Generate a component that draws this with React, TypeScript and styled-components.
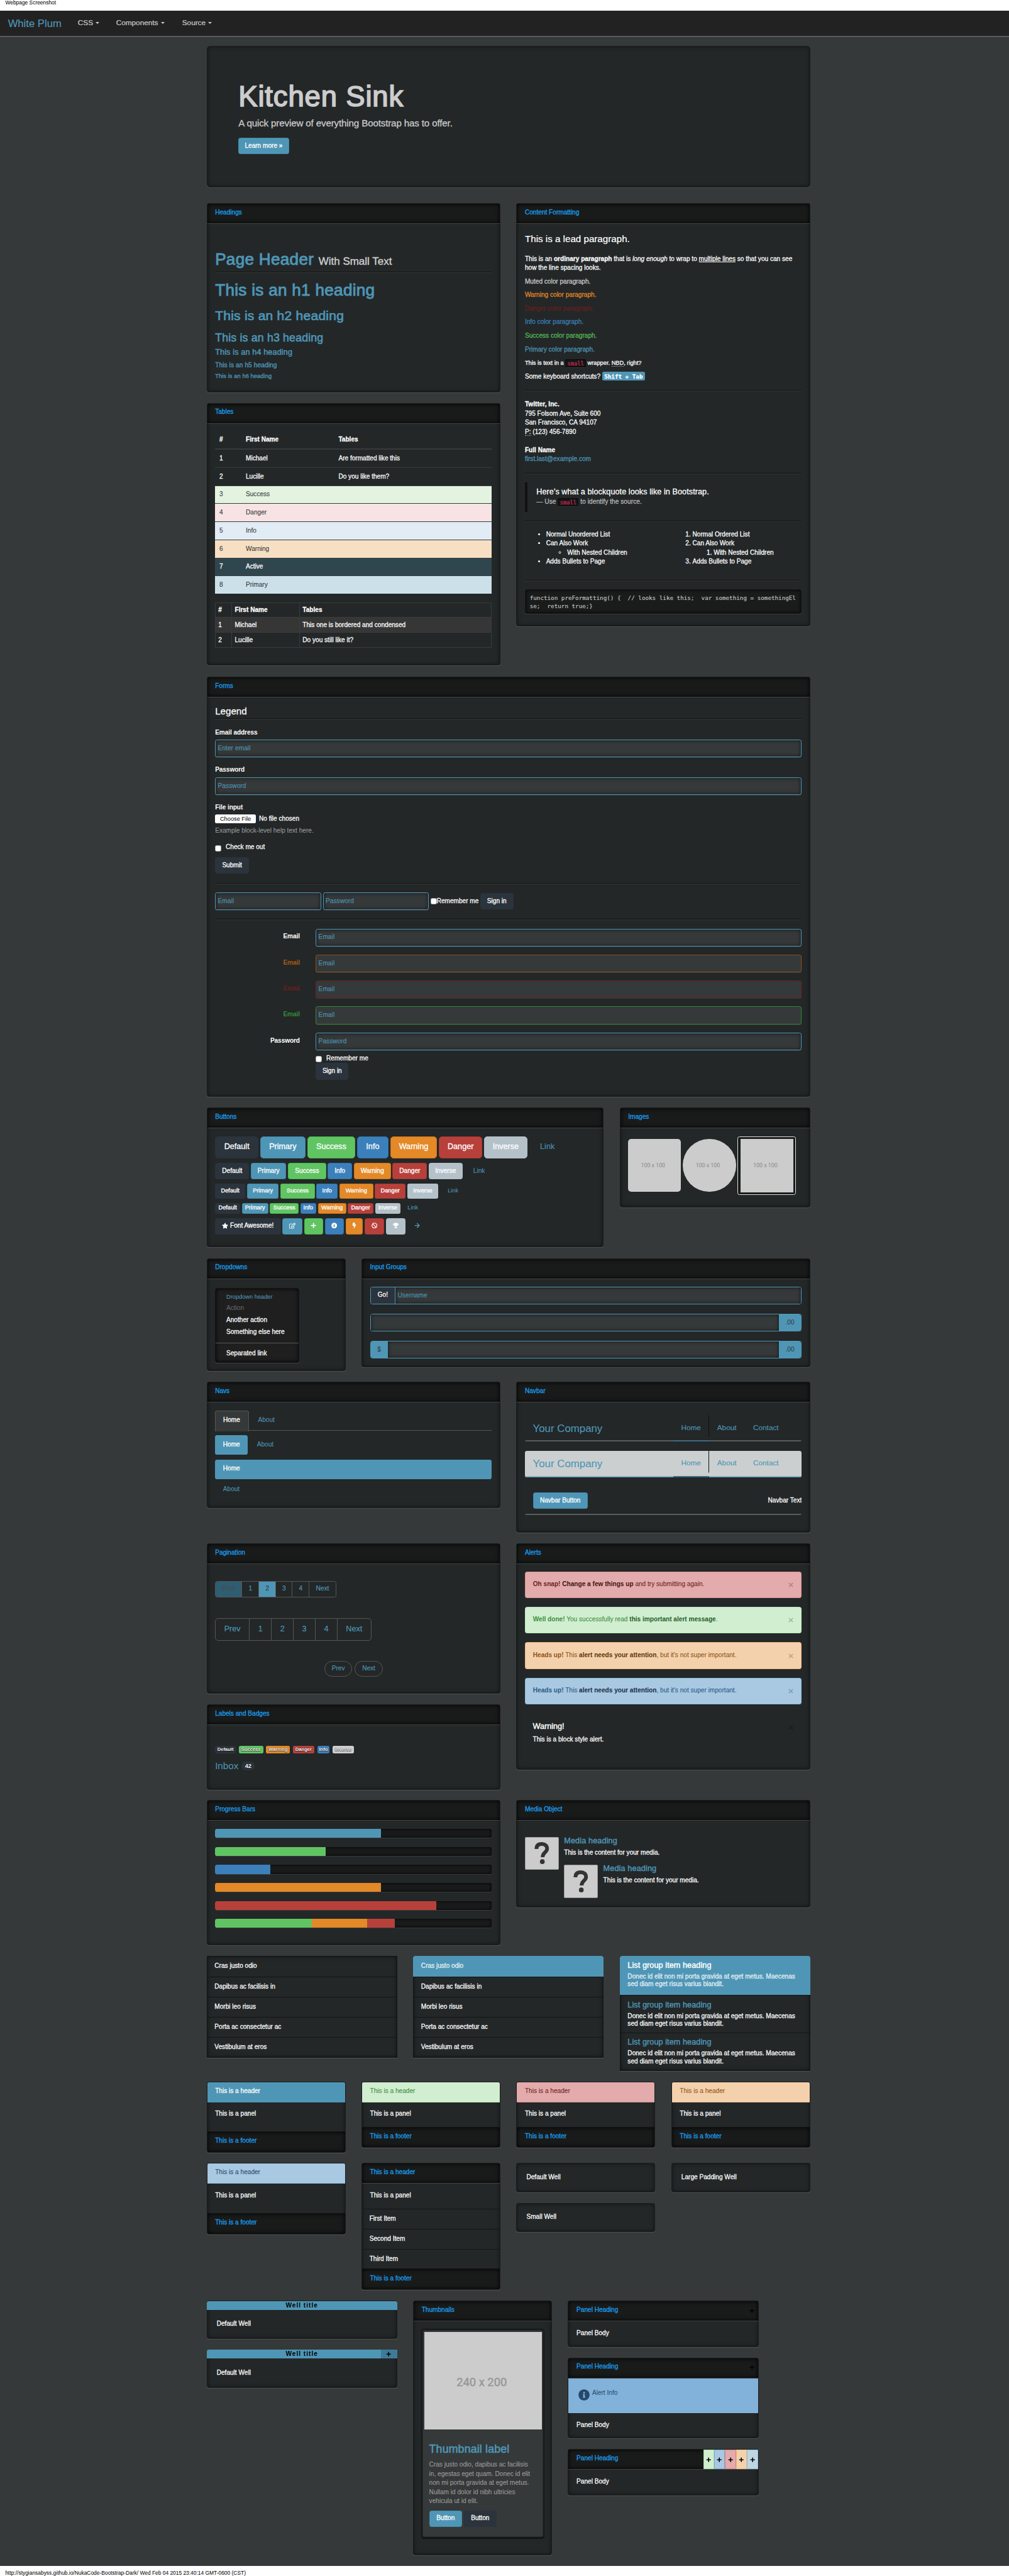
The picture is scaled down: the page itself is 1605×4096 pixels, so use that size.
import React from 'react';
import styled, { createGlobalStyle, css } from 'styled-components';
import { FaStar, FaRegEdit, FaPlus, FaInfoCircle, FaBolt, FaBan, FaTrophy, FaArrowRight } from 'react-icons/fa';

const c = {
  page: '#353939', panel: '#232728', head: '#191b1a', primary: '#4f96b6', link: '#4f96b6',
  success: '#61c463', info: '#3b80bb', warning: '#e38927', danger: '#b8403b', inverse: '#b4c1c9',
  dark: '#2b333c', title: '#18a2f8', muted: '#cccccc',
};

const Global = createGlobalStyle`
  html, body { margin: 0; padding: 0; background: #fff; }
  body { overflow-x: hidden; }
  *, *::before, *::after { box-sizing: border-box; }
`;

const Root = styled.div`
  zoom: 0.8424;
  font: 12px/17.14px "Liberation Sans", Arial, sans-serif;
  color: #fff;
  height: 4862px;
  overflow: hidden;
  display: flex;
  flex-direction: column;
`;
const Strip = styled.div<{ $h: number; $t?: number }>`
  height: ${p => p.$h}px;
  flex: none;
  padding: ${p => p.$t || 0}px 10px 0;
  background: #fff;
  color: #000;
  font-size: 10px;
  line-height: 10px;
  white-space: nowrap;
  overflow: hidden;
`;
const TopNav = styled.nav`
  height: 50px;
  flex: none;
  background: #222;
  border-bottom: 3px solid #575c5c;
  display: flex;
  padding-left: 15px;
`;
const Brand = styled.div`
  font-size: 19.8px;
  line-height: 20px;
  padding-top: 16px;
  color: ${c.primary};
  margin-right: 15px;
  width: 102px;
  white-space: nowrap;
  -webkit-text-stroke: 0.2px;
`;
const TopLink = styled.div<{ $w: number }>`
  font-size: 14px;
  line-height: 20px;
  padding: 13px 0 0 15px;
  width: ${p => p.$w}px;
  color: #ccc;
  -webkit-text-stroke: 0.25px #ccc;
  display: flex;
  &::after {
    content: '';
    margin: 9px 0 0 5px;
    width: 0; height: 0;
    border: 4px solid transparent;
    border-top-color: #ccc;
    border-bottom: 0;
  }
`;
const Page = styled.main`
  flex: 1;
  background: ${c.page};
  padding: 17px 0 0 390px;
`;
const Row = styled.div<{ $h: number }>`
  height: ${p => p.$h}px;
  width: 1140px;
  display: flex;
  align-items: flex-start;
  gap: 30px;
`;
const Col = styled.div<{ $w: number; $gap?: number }>`
  width: ${p => p.$w}px;
  flex: none;
  display: flex;
  flex-direction: column;
  gap: ${p => p.$gap ?? 20}px;
`;
const inset = css`box-shadow: inset 0 0 8px rgba(0,0,0,0.55), 0 1px 0 rgba(255,255,255,0.16);`;
const Frame = styled.section<{ $h: number }>`
  height: ${p => p.$h}px;
  flex: none;
  border: 1px solid #1b1d1d;
  border-radius: 4px;
  background: ${c.panel};
  ${inset}
  overflow: hidden;
  display: flex;
  flex-direction: column;
`;
const heads: Record<string, [string, string, string]> = {
  base: [c.head, c.title, '#414341'],
  primary: [c.primary, '#fff', c.primary],
  success: ['#d1eed0', '#3b8f3e', '#c3e9c0'],
  danger: ['#e3abab', '#6b2320', '#dc9297'],
  warning: ['#f4d1ad', '#8f5415', '#f0bd92'],
  info: ['#a9c8e2', '#24496b', '#98c3dd'],
};
const Head = styled.header<{ $k: string }>`
  height: 38px;
  flex: none;
  padding: 9.3px 15px 0;
  line-height: 14.5px;
  background: ${p => heads[p.$k][0]};
  color: ${p => heads[p.$k][1]};
  -webkit-text-stroke: ${p => (p.$k === 'base' || p.$k === 'primary' ? 0.3 : 0.1)}px;
  border-bottom: 1px solid ${p => heads[p.$k][2]};
  box-shadow: ${p => (p.$k === 'base' ? 'inset 0 0 9px #000' : 'none')};
  display: flex;
  justify-content: space-between;
  white-space: nowrap;
`;
const Foot = styled.footer`
  margin-top: auto;
  height: 39px;
  padding: 9px 15px 0;
  line-height: 17px;
  background: ${c.head};
  color: ${c.title};
  -webkit-text-stroke: 0.3px;
  border-top: 1px solid #101111;
  box-shadow: inset 0 0 9px #000;
`;
const Body = styled.div<{ $p?: number; $h?: number }>`
  padding: ${p => p.$p ?? 15}px 15px 0;
  height: ${p => (p.$h ? p.$h + 'px' : 'auto')};
  -webkit-text-stroke: 0.3px;
`;
const Panel = ({ h, title, kind = 'base', foot, extra, children }: any) => (
  <Frame $h={h}>
    <Head $k={kind}><span>{title}</span>{extra}</Head>
    {children}
    {foot && <Foot>{foot}</Foot>}
  </Frame>
);

const Jumbo = styled.section`
  width: 1140px;
  height: 267px;
  border-radius: 6px;
  background: ${c.panel};
  border: 1px solid #1b1d1d;
  ${inset}
  padding: 65px 59px 0;
  color: #ccc;
`;
const JumboTitle = styled.h1`
  margin: 0;
  font-weight: 400;
  font-size: 54px;
  line-height: 60px;
  letter-spacing: 1px;
  -webkit-text-stroke: 2px;
  height: 70px;
`;
const JumboText = styled.p`
  margin: 0 0 17px;
  font-size: 18px;
  line-height: 20px;
  letter-spacing: -0.18px;
  -webkit-text-stroke: 0.3px;
`;

const H = styled.div<{ $s: number; $t?: number; $b?: number }>`
  font-size: ${p => p.$s}px;
  line-height: ${p => p.$s * 1.1}px;
  margin: ${p => p.$t || 0}px 0 ${p => p.$b || 0}px;
  color: ${c.primary};
  -webkit-text-stroke: ${p => p.$s * 0.035}px;
  letter-spacing: ${p => p.$s * 0.011}px;
  white-space: nowrap;
`;
const Small = styled.small`font-size: 65%; color: #ccc; -webkit-text-stroke: 0.5px; letter-spacing: 0;`;
const PageHeader = styled.div`
  margin: 34px 0 0;
  height: 42px;
  border-bottom: 1px solid #111;
  box-shadow: 0 1px 0 #3b3e3e;
`;
const Rule = styled.hr<{ $t?: number; $b?: number }>`
  border: 0;
  height: 1px;
  background: #111;
  box-shadow: 0 1px 0 #393c3c;
  margin: ${p => p.$t ?? 17}px 0 ${p => p.$b ?? 17}px;
`;
const TRow = styled.div<{ $bg?: string; $fg?: string; $head?: boolean }>`
  display: grid;
  grid-template-columns: 50px 175px 1fr;
  height: ${p => (p.$head ? 34 : 34.13)}px;
  padding-top: 8px;
  border-${p => (p.$head ? 'bottom: 2px' : 'top: 1px')} solid #383b3b;
  background: ${p => p.$bg || 'transparent'};
  color: ${p => p.$fg || '#fff'};
  -webkit-text-stroke: ${p => (p.$fg ? 0.1 : 0.3)}px;
  font-weight: ${p => (p.$head ? 700 : 400)};
  & > span { padding-left: 8px; }
`;
const TRow2 = styled.div<{ $bg?: string; $head?: boolean }>`
  display: grid;
  grid-template-columns: 31px 128px 1fr;
  height: 28.4px;
  border-bottom: 1px solid #393b3b;
  background: ${p => p.$bg || 'transparent'};
  font-weight: ${p => (p.$head ? 700 : 400)};
  & > span { padding: 5px 5px 0; border-left: 1px solid #393b3b; }
`;
const Table2 = styled.div`
  margin-top: 16px;
  border-top: 1px solid #393b3b;
  border-right: 1px solid #393b3b;
`;

const Lead = styled.p`margin: 0 0 17px; font-size: 18px; line-height: 25.2px; -webkit-text-stroke: 0.25px;`;
const P = styled.p<{ $c?: string; $s?: number }>`
  margin: 0 0 8.5px;
  height: ${p => (p.$s ? '17.1px' : 'auto')};
  color: ${p => p.$c || 'inherit'};
  font-size: ${p => p.$s || 12}px;
`;
const Code = styled.code`
  font: 10.3px/13px "DejaVu Sans Mono", monospace;
  color: #c7254e;
  background: #161818;
  border-radius: 4px;
  padding: 2px 4px;
  box-shadow: inset 0 0 4px #000, 0 1px 0 #3b3e3e;
`;
const Kbd = styled.kbd`
  font: bold 11px/13px "DejaVu Sans Mono", monospace;
  color: #fff;
  background: ${c.primary};
  border-radius: 3px;
  padding: 2px 4px;
`;
const Abbr = styled.span`border-bottom: 1px dotted #aaa;`;
const A = styled.span`color: ${c.link};`;
const Address = styled.address<{ $t?: number }>`font-style: normal; margin-top: ${p => p.$t || 0}px;`;
const Quote = styled.div`
  height: 55px;
  border-left: 5px solid #111;
  padding: 8.5px 17px 0;
  font-size: 15px;
  line-height: 20px;
  letter-spacing: 0.08px;
  & > div { font-size: 12px; line-height: 17px; color: #bbb; }
`;
const Lists = styled.div`
  display: grid;
  grid-template-columns: 276.5px 1fr;
  height: 77px;
  ul, ol { margin: 0; padding-left: 40px; }
`;
const Pre = styled.pre`
  margin: 0;
  height: 46px;
  padding: 8px 0 0 8px;
  font: 11px/15px "DejaVu Sans Mono", monospace;
  color: #ccc;
  background: #1a1c1b;
  border-radius: 4px;
  border: 1px solid #151717;
  box-shadow: inset 0 0 6px #000, 0 1px 0 #3b3e3e;
  -webkit-text-stroke: 0.1px;
`;

const Legend = styled.div`
  font-size: 18px;
  line-height: 25px;
  height: 27px;
  border-bottom: 1px solid #111;
  box-shadow: 0 1px 0 #393c3c;
  margin-bottom: 17px;
  -webkit-text-stroke: 0.3px;
`;
const Label = styled.div<{ $c?: string }>`
  font-weight: 700;
  -webkit-text-stroke: 0;
  color: ${p => p.$c || '#fff'};
  margin-bottom: 5px;
  letter-spacing: -0.1px;
`;
const Field = styled.div<{ $c?: string; $w?: number; $mb?: number }>`
  height: 33.5px;
  width: ${p => (p.$w ? p.$w + 'px' : 'auto')};
  flex: ${p => (p.$w ? 'none' : '1')};
  margin-bottom: ${p => p.$mb || 0}px;
  padding: 7px 4px 0;
  background: ${c.page};
  border: 1px solid ${p => p.$c || c.primary};
  border-radius: 4px;
  color: ${c.primary};
  letter-spacing: 0.1px;
  -webkit-text-stroke: 0.15px;
  box-shadow: ${p => (p.$c ? 'inset 0 1px 1px rgba(0,0,0,.08)' : 'inset 0 0 7px rgba(0,0,0,.6)')}, 0 1px 0 rgba(255,255,255,.1);
`;
const HRow = styled.div<{ $h?: number }>`
  display: flex;
  height: ${p => p.$h || 49}px;
  & > ${Label} { width: 160px; text-align: right; padding-top: 7px; margin: 0 30px 0 0; }
  & > ${Field} { height: 33.5px; }
`;
const Check = styled.span`
  width: 12px; height: 12px;
  background: #fff;
  border: 1px solid #aaa;
  border-radius: 3px;
  flex: none;
`;
const CheckRow = styled.div<{ $h: number; $l?: number }>`
  display: flex;
  gap: 8px;
  height: ${p => p.$h}px;
  margin-left: ${p => p.$l || 0}px;
  ${Check} { margin-top: 4px; }
`;
const Indent = styled.div`padding-left: 190px;`;
const FileRow = styled.div`
  display: flex;
  gap: 6px;
  height: 17px;
  & > b {
    width: 77px; height: 16px;
    background: #fff; color: #000;
    font-size: 11px; line-height: 17px; font-weight: 400;
    border-radius: 3px;
    text-align: center;
    -webkit-text-stroke: 0;
  }
`;
const Help = styled.div`color: #9a9a9a; -webkit-text-stroke: 0.1px; margin-top: 5px; height: 31.5px;`;
const Inline = styled.div`
  display: flex;
  align-items: center;
  height: 33.5px;
  gap: 3.5px;
`;
const InlineText = styled.span`margin: 0 -1px 0 -4px; white-space: nowrap;`;

const kinds: Record<string, [string, string, string]> = {
  default: [c.dark, '#fff', c.dark],
  primary: [c.primary, '#fff', '#4087a6'],
  success: [c.success, '#fff', '#47b749'],
  info: [c.info, '#fff', '#3372a8'],
  warning: [c.warning, '#fff', '#cf771a'],
  danger: [c.danger, '#fff', '#a33733'],
  inverse: [c.inverse, '#fff', c.inverse],
  link: ['transparent', c.link, 'transparent'],
};
const sizes = { lg: [41, 15, 6], md: [31, 12, 4], sm: [28, 11, 3], xs: [20, 11, 3] } as const;
const Btn = styled.button<{ $k?: string; $s?: keyof typeof sizes; $w: number }>`
  font-family: inherit;
  height: ${p => sizes[p.$s || 'md'][0]}px;
  width: ${p => p.$w}px;
  flex: none;
  padding: 0 0 2px;
  font-size: ${p => sizes[p.$s || 'md'][1]}px;
  border-radius: ${p => sizes[p.$s || 'md'][2]}px;
  background: ${p => kinds[p.$k || 'default'][0]};
  color: ${p => kinds[p.$k || 'default'][1]};
  border: 1px solid ${p => kinds[p.$k || 'default'][2]};
  -webkit-text-stroke: ${p => (p.$k === 'link' ? 0.1 : 0.35)}px;
  display: flex;
  align-items: center;
  justify-content: center;
  gap: 3px;
  white-space: nowrap;
`;
const BtnRow = styled.div<{ $h: number }>`display: flex; gap: 3.4px; height: ${p => p.$h}px;`;
const names = ['Default', 'Primary', 'Success', 'Info', 'Warning', 'Danger', 'Inverse', 'Link'];

const Images = styled.div`display: flex; align-items: center; gap: 3.4px; height: 110px;`;
const Ph = styled.div<{ $r: string }>`
  width: 100px; height: 100px;
  border-radius: ${p => p.$r};
  background: #ccc;
  color: #969696;
  font: 10.5px/102px Roboto, sans-serif;
  text-align: center;
  padding-right: 6px;
  -webkit-text-stroke: 0.2px;
`;
const Thumb = styled.div`
  width: 110px; height: 110px;
  border: 1px solid #ddd;
  border-radius: 4px;
  padding: 4px;
  background: #1a1c1b;
`;
const Menu = styled.div`
  margin-top: 2px;
  width: 158.5px;
  height: 141px;
  background: #1f1f1f;
  border: 1px solid #151515;
  border-radius: 4px;
  box-shadow: inset 0 0 7px #000, 0 1px 0 #414444;
  padding: 7px 0 0;
`;
const MenuItem = styled.div<{ $c?: string; $s?: number; $h: number }>`
  padding-left: 20px;
  height: ${p => p.$h}px;
  color: ${p => p.$c || '#fff'};
  font-size: ${p => p.$s || 12}px;
  -webkit-text-stroke: ${p => (p.$c ? 0.1 : 0.3)}px;
`;
const Divider = styled.div`height: 1px; background: #565656; margin: 0 0 11px;`;
const Group = styled.div`
  height: 34px;
  margin-bottom: 17px;
  display: flex;
  border: 1px solid ${c.primary};
  border-radius: 4px;
  overflow: hidden;
`;
const Addon = styled.div<{ $w: number }>`
  width: ${p => p.$w}px;
  background: ${c.primary};
  color: #353939;
  line-height: 31px;
  text-align: center;
  -webkit-text-stroke: 0.1px;
`;
const Go = styled(Addon)`background: ${c.dark}; color: #fff; border-right: 1px solid ${c.primary}; -webkit-text-stroke: 0.3px; line-height: 29px;`;
const GInput = styled.div`
  flex: 1;
  background: ${c.page};
  box-shadow: inset 0 0 8px rgba(0,0,0,.6);
  color: ${c.primary};
  line-height: 30px;
  padding-left: 4px;
  letter-spacing: 0.1px;
  -webkit-text-stroke: 0.15px;
`;

const Tabs = styled.div`height: 39px; border-bottom: 1px solid #565656; display: flex; align-items: flex-start; gap: 2px; & > * { flex: none; }`;
const Pills = styled.div`height: 54px; padding-top: 8px; display: flex; gap: 2px;`;
const Stack = styled.div`display: flex; flex-direction: column; gap: 2px;`;
const Pill = styled.div<{ $on?: boolean; $tab?: boolean }>`
  height: ${p => (p.$tab ? 39.5 : 37)}px;
  min-width: ${p => (p.$tab ? 64 : 62)}px;
  padding: ${p => (p.$tab ? '10px 14px' : '10px 15px')};
  border-radius: ${p => (p.$tab ? '4px 4px 0 0' : '4px')};
  border: ${p => (p.$tab ? '1px solid ' + (p.$on ? '#565656' : 'transparent') : '0')};
  border-bottom: 0;
  background: ${p => (p.$on ? (p.$tab ? c.page : c.primary) : 'transparent')};
  color: ${p => (p.$on ? '#fff' : c.link)};
  -webkit-text-stroke: ${p => (p.$on ? 0.35 : 0.1)}px;
  line-height: 15px;
`;
const NB = styled.div<{ $light?: boolean; $h: number; $mb: number }>`
  height: ${p => p.$h}px;
  margin-bottom: ${p => p.$mb}px;
  display: flex;
  border-radius: 4px;
  background: ${p => (p.$light ? '#cccfcf' : 'transparent')};
  position: relative;
  overflow: hidden;
  -webkit-text-stroke: 0.15px;
  &::after {
    content: '';
    position: absolute;
    left: 0; right: 0; bottom: 0;
    height: 3px;
    background: ${p => (p.$light ? '#7ab1c8' : '#575c5c')};
  }
`;
const NBBrand = styled.div`width: 280px; padding: 16px 0 0 15px; font-size: 20px; line-height: 20px; color: ${c.primary};`;
const NBForm = styled.div`padding: 11px 0 0 15px; flex: 1;`;
const NBText = styled.span`padding-top: 18px; -webkit-text-stroke: 0.3px;`;
const NBLink = styled.div<{ $w: number; $on?: boolean }>`
  width: ${p => p.$w}px;
  padding: 14px 0 0 15px;
  font-size: 14px;
  line-height: 20px;
  color: ${c.primary};
  ${p => p.$on && css`
    background: linear-gradient(#111, #111) right 0 top 0 / 1.2px 41px no-repeat;
    &::after {
      content: '';
      position: absolute;
      z-index: 1;
      left: 280px; bottom: 0;
      width: 68px; height: 3px;
      background: #3a6c86;
    }
  `}
`;
const NavLinks = () => (<>
  <NBBrand>Your Company</NBBrand>
  <NBLink $w={68} $on>Home</NBLink><NBLink $w={68}>About</NBLink><NBLink $w={80}>Contact</NBLink>
</>);

const Pager = styled.div<{ $s: number; $h: number; $t: number }>`
  margin-top: ${p => p.$t}px;
  height: ${p => p.$h}px;
  display: flex;
  width: max-content;
  border: 1px solid #565656;
  border-radius: ${p => (p.$s > 12 ? 6 : 4)}px;
  font-size: ${p => p.$s}px;
  color: ${c.primary};
  overflow: hidden;
  -webkit-text-stroke: 0.2px;
`;
const Pg = styled.span<{ $w: number; $bg?: string; $fg?: string }>`
  width: ${p => p.$w}px;
  display: flex;
  align-items: center;
  justify-content: center;
  padding-bottom: 2px;
  background: ${p => p.$bg || 'transparent'};
  color: ${p => p.$fg || 'inherit'};
  & + & { border-left: 1px solid #565656; }
`;
const Rounds = styled.div`margin-top: 39px; display: flex; justify-content: center; gap: 4.5px;`;
const Round = styled.span`
  height: 29px;
  width: 53px;
  border: 1px solid #565656;
  border-radius: 15px;
  text-align: center;
  line-height: 25px;
  color: ${c.primary};
  -webkit-text-stroke: 0.15px;
`;
const Tags = styled.div`display: flex; gap: 5.7px; margin-top: 24px;`;
const Tag = styled.span<{ $bg: string; $w: number }>`
  width: ${p => p.$w}px;
  height: 15px;
  background: ${p => p.$bg};
  border-radius: 3px;
  font: bold 9px/15px "Liberation Sans", sans-serif;
  text-align: center;
  -webkit-text-stroke: 0;
  text-shadow: 0 0 1px #000, 0 1px 1px rgba(0,0,0,.7);
`;
const Inbox = styled.div`
  margin-top: 14px;
  font-size: 18px;
  line-height: 20px;
  color: ${c.primary};
  -webkit-text-stroke: 0;
  display: flex;
  gap: 6px;
  b {
    width: 25px; height: 17px;
    margin-top: 1px;
    background: ${c.dark};
    border-radius: 10px;
    color: #fff;
    font-size: 11px;
    line-height: 18px;
    text-align: center;
    text-shadow: 0 0 1px #000;
  }
`;
const alertK: Record<string, [string, string, string, string]> = {
  danger: ['#e3abab', '#dc8f95', '#6b2320', '#3f1513'],
  success: ['#d1eed0', '#c0e8bb', '#3b8f3e', '#26602a'],
  warning: ['#f4d1ad', '#f0b384', '#8f5415', '#5c3509'],
  info: ['#a9c8e2', '#8ac0dd', '#2a5b85', '#152f47'],
};
const Alert = styled.div<{ $k: string }>`
  height: 50px;
  margin-bottom: 17px;
  padding: 14.5px 14px 0;
  border-radius: 4px;
  background: ${p => alertK[p.$k][0]};
  border: 1px solid ${p => alertK[p.$k][1]};
  color: ${p => alertK[p.$k][2]};
  -webkit-text-stroke: 0.1px;
  display: flex;
  justify-content: space-between;
  white-space: nowrap;
  b, em { -webkit-text-stroke: 0; }
  em { font-style: normal; font-weight: 700; color: ${p => alertK[p.$k][3]}; }
`;
const X = styled.span`font-size: 18px; font-weight: 700; line-height: 18px; color: rgba(0,0,0,.22); -webkit-text-stroke: 0;`;
const BlockAlert = styled.div`
  padding: 17px 15px 0;
  display: flex;
  justify-content: space-between;
  h4 { margin: 0 0 8px; font-size: 15px; line-height: 16.5px; font-weight: 400; -webkit-text-stroke: 0.5px; }
`;

const Track = styled.div`
  height: 17px;
  margin-bottom: 17px;
  background: #191b1a;
  border-radius: 4px;
  overflow: hidden;
  display: flex;
  box-shadow: 0 1px 0 #414444, inset 0 0 6px #000;
`;
const Fill = styled.div<{ $c: string; $w: number }>`width: ${p => p.$w}%; background: ${p => p.$c};`;
const Media = styled.div<{ $l?: number; $t: number }>`
  display: flex;
  margin: ${p => p.$t}px 0 0 ${p => p.$l || 0}px;
  height: 62px;
  gap: 10px;
  white-space: nowrap;
`;
const QBox = styled.div`
  width: 64px; height: 62px;
  flex: none;
  background: #ccc;
  border: 1px solid #999;
  border-radius: 2px;
  display: flex;
  align-items: center;
  justify-content: center;
`;
const Q = () => (
  <QBox>
    <svg width="28" height="42" viewBox="0 0 28 42" fill="none">
      <path d="M4 13C4 6 8 3.5 14 3.5s10 3.5 10 9c0 7-8.5 7-8.5 16" stroke="#333" strokeWidth="7" />
      <circle cx="15" cy="37" r="4.5" fill="#333" />
    </svg>
  </QBox>
);

const LG = styled.div<{ $w: number }>`
  width: ${p => p.$w}px;
  flex: none;
  background: ${c.panel};
  border: 1px solid #131515;
  ${inset}
  -webkit-text-stroke: 0.3px;
`;
const LI = styled.div<{ $h: number; $on?: boolean; $line?: boolean }>`
  height: ${p => p.$h}px;
  padding: 10px 14px 0;
  background: ${p => (p.$on ? c.primary : 'transparent')};
  margin: ${p => (p.$on ? '-1px -1px 0' : 0)};
  border-radius: ${p => (p.$on ? '4px 4px 0 0' : 0)};
  color: ${p => (p.$on ? '#e6f1f6' : '#fff')};
  -webkit-text-stroke: 0.3px;
  ${p => p.$on && 'padding-left: 15px;'}
  ${p => p.$line && 'border-top: 1px solid #131515;'}
  & + & { border-top: 1px solid #131515; }
  h4 { margin: 0 0 5px; font-weight: 400; font-size: 15px; line-height: 16.5px; letter-spacing: 0.1px; color: ${p => (p.$on ? '#fff' : c.primary)}; -webkit-text-stroke: 0.5px; }
  p { margin: 0; line-height: 15px; white-space: nowrap; }
`;
const WellBox = styled.div<{ $h: number }>`
  height: ${p => p.$h}px;
  flex: none;
  background: ${c.panel};
  border: 1px solid #1b1d1d;
  border-radius: 4px;
  ${inset}
  padding: 17px 18px 0;
  -webkit-text-stroke: 0.3px;
`;
const WellTitle = styled.div`
  height: 17px;
  margin: -18px -19px 18px;
  background: ${c.primary};
  border-radius: 4px 4px 0 0;
  color: #000;
  font-weight: 700;
  line-height: 17px;
  letter-spacing: 1.2px;
  -webkit-text-stroke: 0;
  display: flex;
  & > span { flex: 1; text-align: center; }
`;
const WellBtn = styled.div`
  width: 31px;
  margin-left: -31px;
  background: #3d7c99;
  display: flex;
  align-items: center;
  justify-content: center;
  font-size: 10px;
`;
const Card = styled.div`
  width: 231px;
  height: 393px;
  background: ${c.page};
  border: 1px solid #1a1c1c;
  border-radius: 4px;
  box-shadow: 0 1px 3px #000, inset 0 0 2px #000;
  padding: 3.5px 4px 0;
`;
const Big = styled.div`
  width: 221.5px;
  height: 184.5px;
  background: #ccc;
  color: #969696;
  font: 21.8px/190px Roboto, sans-serif;
  text-align: center;
  padding-right: 5px;
  -webkit-text-stroke: 0.5px;
`;
const Caption = styled.div`
  padding: 0 9px;
  color: #9a9a9a;
  -webkit-text-stroke: 0.15px;
  p { margin: 9px 0 8.5px; white-space: nowrap; }
`;
const HeadPlus = styled.span`color: #000; font-size: 10px; margin: 3px -9px 0 0;`;
const Tools = styled.span`display: flex; margin: -9.3px -15px 0 0; height: 37px;`;
const Tool = styled.i<{ $bg: string; $b: string }>`
  width: 20.7px;
  background: ${p => p.$bg};
  border: 1px solid ${p => p.$b};
  color: #000;
  font-size: 10px;
  display: flex;
  align-items: center;
  justify-content: center;
`;
const InfoAlert = styled.div`
  height: 66px;
  flex: none;
  background: #82b1d9;
  color: #24496b;
  display: flex;
  gap: 5px;
  padding: 21px 18px 0;
  & > span { margin-top: -2px; }
`;

const rowW: Record<string, number[]> = {
  lg: [82, 85, 91, 59, 88.7, 82, 81.5, 69],
  md: [64.3, 66.6, 71.8, 45.8, 69.7, 65, 63.6, 56],
  sm: [57, 59.9, 64.4, 40, 63.6, 57.7, 58.5, 49],
  xs: [47.4, 49.5, 54, 29.6, 53.3, 48, 48, 40],
};
const rowH: Record<string, number> = { lg: 50, md: 39, sm: 36.7, xs: 28.3 };

export default function App() {
  return (
    <Root>
      <Global />
      <Strip $h={20}>Webpage Screenshot</Strip>
      <TopNav>
        <Brand>White Plum</Brand>
        <TopLink $w={72.3}>CSS</TopLink><TopLink $w={124.7}>Components</TopLink><TopLink $w={90}>Source</TopLink>
      </TopNav>
      <Page>
        <Row $h={297}>
          <Jumbo>
            <JumboTitle>Kitchen Sink</JumboTitle>
            <JumboText>A quick preview of everything Bootstrap has to offer.</JumboText>
            <Btn $k="primary" $w={95.5}>Learn more »</Btn>
          </Jumbo>
        </Row>

        <Row $h={893}>
          <Col $w={555}>
            <Panel h={356.5} title="Headings">
              <Body>
                <PageHeader><H $s={31}>Page Header <Small>With Small Text</Small></H></PageHeader>
                <H $s={31} $t={16.5} $b={17}>This is an h1 heading</H>
                <H $s={25} $b={17}>This is an h2 heading</H>
                <H $s={21} $b={8.5}>This is an h3 heading</H>
                <H $s={15} $b={8.5}>This is an h4 heading</H>
                <H $s={12} $b={8.5}>This is an h5 heading</H>
                <H $s={11}>This is an h6 heading</H>
              </Body>
            </Panel>
            <Panel h={495} title="Tables">
              <Body $p={14}>
                <TRow $head><span>#</span><span>First Name</span><span>Tables</span></TRow>
                <TRow><span>1</span><span>Michael</span><span>Are formatted like this</span></TRow>
                <TRow><span>2</span><span>Lucille</span><span>Do you like them?</span></TRow>
                <TRow $bg="#e3f3e0" $fg="#33383a"><span>3</span><span>Success</span></TRow>
                <TRow $bg="#f7e3e3" $fg="#33383a"><span>4</span><span>Danger</span></TRow>
                <TRow $bg="#e2ecf5" $fg="#33383a"><span>5</span><span>Info</span></TRow>
                <TRow $bg="#f7dfc4" $fg="#33383a"><span>6</span><span>Warning</span></TRow>
                <TRow $bg="#30464f"><span>7</span><span>Active</span></TRow>
                <TRow $bg="#cbe0e9" $fg="#33383a"><span>8</span><span>Primary</span></TRow>
                <Table2>
                  <TRow2 $head><span>#</span><span>First Name</span><span>Tables</span></TRow2>
                  <TRow2 $bg="#363636"><span>1</span><span>Michael</span><span>This one is bordered and condensed</span></TRow2>
                  <TRow2><span>2</span><span>Lucille</span><span>Do you still like it?</span></TRow2>
                </Table2>
              </Body>
            </Panel>
          </Col>
          <Col $w={555}>
            <Panel h={798} title="Content Formatting">
              <Body>
                <Lead>This is a lead paragraph.</Lead>
                <P>This is an <b>ordinary paragraph</b> that is <i>long enough</i> to wrap to <u>multiple lines</u> so that you can see<br />how the line spacing looks.</P>
                <P $c="#ccc">Muted color paragraph.</P>
                <P $c={c.warning}>Warning color paragraph.</P>
                <P $c="#661f1f">Danger color paragraph.</P>
                <P $c={c.info}>Info color paragraph.</P>
                <P $c="#55bb57">Success color paragraph.</P>
                <P $c={c.primary}>Primary color paragraph.</P>
                <P $s={11}>This is text in a <Code>small</Code> wrapper. <Abbr>NBD</Abbr>, right?</P>
                <P $s={12}>Some keyboard shortcuts? <Kbd>Shift + Tab</Kbd></P>
                <Rule $t={17} $b={18} />
                <Address><b>Twitter, Inc.</b><br />795 Folsom Ave, Suite 600<br />San Francisco, CA 94107<br /><Abbr>P:</Abbr> (123) 456-7890</Address>
                <Address $t={17}><b>Full Name</b><br /><A>first.last@example.com</A></Address>
                <Rule $t={17.5} />
                <Quote>Here's what a blockquote looks like in Bootstrap.<div>— Use <Code>small</Code> to identify the source.</div></Quote>
                <Rule />
                <Lists>
                  <ul><li>Normal Unordered List</li><li>Can Also Work<ul><li>With Nested Children</li></ul></li><li>Adds Bullets to Page</li></ul>
                  <ol><li>Normal Ordered List</li><li>Can Also Work<ol><li>With Nested Children</li></ol></li><li>Adds Bullets to Page</li></ol>
                </Lists>
                <Rule />
                <Pre>{'function preFormatting() {  // looks like this;  var something = somethingEl\nse;  return true;}'}</Pre>
              </Body>
            </Panel>
          </Col>
        </Row>

        <Row $h={814}>
          <Col $w={1140}>
            <Panel h={793.5} title="Forms">
              <Body $p={14}>
                <Legend>Legend</Legend>
                <Label>Email address</Label>
                <Field $mb={15}>Enter email</Field>
                <Label>Password</Label>
                <Field $mb={15}>Password</Field>
                <Label>File input</Label>
                <FileRow><b>Choose File</b>No file chosen</FileRow>
                <Help>Example block-level help text here.</Help>
                <CheckRow $h={27.5}><Check />Check me out</CheckRow>
                <Btn $w={64}>Submit</Btn>
                <Rule $t={17} $b={17} />
                <Inline>
                  <Field $w={200}>Email</Field>
                  <Field $w={200}>Password</Field>
                  <Check /><InlineText>Remember me</InlineText>
                  <Btn $w={63.5}>Sign in</Btn>
                </Inline>
                <Rule $t={17} $b={17} />
                <HRow><Label>Email</Label><Field>Email</Field></HRow>
                <HRow><Label $c="#a35a13">Email</Label><Field $c="#8f5415">Email</Field></HRow>
                <HRow><Label $c="#661f1f">Email</Label><Field $c="#6b2320">Email</Field></HRow>
                <HRow><Label $c="#338a36">Email</Label><Field $c="#338a36">Email</Field></HRow>
                <HRow $h={40.5}><Label>Password</Label><Field>Password</Field></HRow>
                <CheckRow $h={17.5} $l={190}><Check />Remember me</CheckRow>
                <Indent><Btn $w={62}>Sign in</Btn></Indent>
              </Body>
            </Panel>
          </Col>
        </Row>

        <Row $h={284}>
          <Col $w={750}>
            <Panel h={263.5} title="Buttons">
              <Body>
                {(['lg', 'md', 'sm', 'xs'] as const).map(s => (
                  <BtnRow key={s} $h={rowH[s]}>
                    {names.map((n, i) => <Btn key={n} $k={n.toLowerCase()} $s={s} $w={rowW[s][i]}>{n}</Btn>)}
                  </BtnRow>
                ))}
                <BtnRow $h={31}>
                  <Btn $w={124}><FaStar size={12} />Font Awesome!</Btn>
                  <Btn $k="primary" $w={38}><FaRegEdit size={12} /></Btn>
                  <Btn $k="success" $w={35}><FaPlus size={11} /></Btn>
                  <Btn $k="info" $w={36}><FaInfoCircle size={11} /></Btn>
                  <Btn $k="warning" $w={32}><FaBolt size={11} /></Btn>
                  <Btn $k="danger" $w={37}><FaBan size={11} /></Btn>
                  <Btn $k="inverse" $w={37}><FaTrophy size={11} /></Btn>
                  <Btn $k="link" $w={37}><FaArrowRight size={11} /></Btn>
                </BtnRow>
              </Body>
            </Panel>
          </Col>
          <Col $w={360}>
            <Panel h={188} title="Images">
              <Body>
                <Images><Ph $r="6px">100 x 100</Ph><Ph $r="50%">100 x 100</Ph><Thumb><Ph $r="0">100 x 100</Ph></Thumb></Images>
              </Body>
            </Panel>
          </Col>
        </Row>

        <Row $h={233}>
          <Col $w={262.5}>
            <Panel h={212.5} title="Dropdowns">
              <Body>
                <Menu>
                  <MenuItem $c={c.primary} $s={11} $h={21}>Dropdown header</MenuItem>
                  <MenuItem $c="#666" $h={23}>Action</MenuItem>
                  <MenuItem $h={23}>Another action</MenuItem>
                  <MenuItem $h={28}>Something else here</MenuItem>
                  <Divider />
                  <MenuItem $h={20}>Separated link</MenuItem>
                </Menu>
              </Body>
            </Panel>
          </Col>
          <Col $w={847.5}>
            <Panel h={205.5} title="Input Groups">
              <Body $p={14.5}>
                <Group><Go $w={47}>Go!</Go><GInput>Username</GInput></Group>
                <Group><GInput /><Addon $w={42}>.00</Addon></Group>
                <Group><Addon $w={32}>$</Addon><GInput /><Addon $w={42}>.00</Addon></Group>
              </Body>
            </Panel>
          </Col>
        </Row>

        <Row $h={305}>
          <Col $w={555}>
            <Panel h={238.5} title="Navs">
              <Body>
                <Tabs><Pill $tab $on>Home</Pill><Pill $tab>About</Pill></Tabs>
                <Pills><Pill $on>Home</Pill><Pill>About</Pill></Pills>
                <Stack><Pill $on>Home</Pill><Pill>About</Pill></Stack>
              </Body>
            </Panel>
          </Col>
          <Col $w={555}>
            <Panel h={285} title="Navbar">
              <Body $p={24}>
                <NB $h={50} $mb={17}><NavLinks /></NB>
                <NB $h={51} $mb={17} $light><NavLinks /></NB>
                <NB $h={54} $mb={0}>
                  <NBForm><Btn $k="primary" $w={103.5}>Navbar Button</Btn></NBForm>
                  <NBText>Navbar Text</NBText>
                </NB>
              </Body>
            </Panel>
          </Col>
        </Row>

        <Row $h={485}>
          <Col $w={555}>
            <Panel h={284} title="Pagination">
              <Body $p={32}>
                <Pager $s={12} $h={31} $t={0}>
                  <Pg $w={49} $bg="#2f5d71" $fg="#484d50">Prev</Pg><Pg $w={32}>1</Pg><Pg $w={32} $bg={c.primary} $fg="#353939">2</Pg>
                  <Pg $w={31}>3</Pg><Pg $w={32}>4</Pg><Pg $w={50}>Next</Pg>
                </Pager>
                <Pager $s={15} $h={42.5} $t={39}>
                  <Pg $w={63}>Prev</Pg><Pg $w={41.5}>1</Pg><Pg $w={41.5}>2</Pg><Pg $w={41.5}>3</Pg><Pg $w={41.5}>4</Pg><Pg $w={63.5}>Next</Pg>
                </Pager>
                <Rounds><Round>Prev</Round><Round>Next</Round></Rounds>
              </Body>
            </Panel>
            <Panel h={161} title="Labels and Badges">
              <Body>
                <Tags>
                  <Tag $bg={c.dark} $w={39}>Default</Tag><Tag $bg={c.success} $w={46}>Success</Tag><Tag $bg={c.warning} $w={45}>Warning</Tag>
                  <Tag $bg={c.danger} $w={40}>Danger</Tag><Tag $bg={c.info} $w={23.5}>Info</Tag><Tag $bg="#cccfcf" $w={40}>Inverse</Tag>
                </Tags>
                <Inbox>Inbox<b>42</b></Inbox>
              </Body>
            </Panel>
          </Col>
          <Col $w={555}>
            <Panel h={428} title="Alerts">
              <Body $p={14}>
                <Alert $k="danger"><span><b>Oh snap!</b> <em>Change a few things up</em> and try submitting again.</span><X>×</X></Alert>
                <Alert $k="success"><span><b>Well done!</b> You successfully read <em>this important alert message</em>.</span><X>×</X></Alert>
                <Alert $k="warning"><span><b>Heads up!</b> This <em>alert needs your attention</em>, but it's not super important.</span><X>×</X></Alert>
                <Alert $k="info"><span><b>Heads up!</b> This <em>alert needs your attention</em>, but it's not super important.</span><X>×</X></Alert>
                <BlockAlert><div><h4>Warning!</h4>This is a block style alert.</div><X>×</X></BlockAlert>
              </Body>
            </Panel>
          </Col>
        </Row>

        <Row $h={294}>
          <Col $w={555}>
            <Panel h={274} title="Progress Bars">
              <Body>
                {[[[c.primary, 60]], [[c.success, 40]], [[c.info, 20]], [[c.warning, 60]], [[c.danger, 80]], [[c.success, 35], [c.warning, 20], [c.danger, 10]]].map((b: any, i) => (
                  <Track key={i}>{b.map(([k, w]: any) => <Fill key={k} $c={k} $w={w} />)}</Track>
                ))}
              </Body>
            </Panel>
          </Col>
          <Col $w={555}>
            <Panel h={202} title="Media Object">
              <Body>
                <Media $t={15}><Q /><div><H $s={15} $b={5}>Media heading</H>This is the content for your media.</div></Media>
                <Media $t={-9} $l={74}><Q /><div><H $s={15} $b={5}>Media heading</H>This is the content for your media.</div></Media>
              </Body>
            </Panel>
          </Col>
        </Row>

        <Row $h={237}>
          {[false, true].map(on => (
            <LG key={String(on)} $w={360}>
              {['Cras justo odio', 'Dapibus ac facilisis in', 'Morbi leo risus', 'Porta ac consectetur ac', 'Vestibulum at eros'].map((t, i) => (
                <LI key={t} $h={i === 0 && on ? 39 : 38} $on={on && i === 0}>{t}</LI>
              ))}
            </LG>
          ))}
          <LG $w={360}>
            {[73.5, 70.5, 72].map((h, i) => (
              <LI key={i} $h={h} $on={i === 0}>
                <h4>List group item heading</h4>
                <p>Donec id elit non mi porta gravida at eget metus. Maecenas<br />sed diam eget risus varius blandit.</p>
              </LI>
            ))}
          </LG>
        </Row>

        <Row $h={154}>
          {[['primary', 134], ['success', 125.5], ['danger', 125.5], ['warning', 125.5]].map(([k, h]) => (
            <Col key={k} $w={262.5}><Panel h={h} kind={k} title="This is a header" foot="This is a footer"><Body $p={14}>This is a panel</Body></Panel></Col>
          ))}
        </Row>

        <Row $h={260}>
          <Col $w={262.5}><Panel h={134.5} kind="info" title="This is a header" foot="This is a footer"><Body $p={14}>This is a panel</Body></Panel></Col>
          <Col $w={262.5}>
            <Panel h={239.5} title="This is a header" foot="This is a footer">
              <Body $p={14} $h={47}>This is a panel</Body>
              {['First Item', 'Second Item', 'Third Item'].map(t => (
                <LI key={t} $h={38} $line>{t}</LI>
              ))}
            </Panel>
          </Col>
          <Col $w={262.5}><WellBox $h={55}>Default Well</WellBox><WellBox $h={55}>Small Well</WellBox></Col>
          <Col $w={262.5}><WellBox $h={55}>Large Padding Well</WellBox></Col>
        </Row>

        <Row $h={480}>
          <Col $w={360}>
            <WellBox $h={72}><WellTitle><span>Well title</span></WellTitle>Default Well</WellBox>
            <WellBox $h={72}><WellTitle><span>Well title</span><WellBtn><FaPlus /></WellBtn></WellTitle>Default Well</WellBox>
          </Col>
          <Col $w={262.5}>
            <Panel h={480} title="Thumbnails">
              <Body>
                <Card>
                  <Big>240 x 200</Big>
                  <Caption>
                    <H $s={21} $t={26}>Thumbnail label</H>
                    <p>Cras justo odio, dapibus ac facilisis<br />in, egestas eget quam. Donec id elit<br />non mi porta gravida at eget metus.<br />Nullam id dolor id nibh ultricies<br />vehicula ut id elit.</p>
                    <BtnRow $h={31}><Btn $k="primary" $w={62}>Button</Btn><Btn $w={62}>Button</Btn></BtnRow>
                  </Caption>
                </Card>
              </Body>
            </Panel>
          </Col>
          <Col $w={360}>
            <Panel h={87} title="Panel Heading" extra={<HeadPlus><FaPlus /></HeadPlus>}><Body $p={14}>Panel Body</Body></Panel>
            <Panel h={153} title="Panel Heading" extra={<HeadPlus><FaPlus /></HeadPlus>}>
              <InfoAlert><FaInfoCircle size={21.5} /><span>Alert Info</span></InfoAlert>
              <Body $p={14}>Panel Body</Body>
            </Panel>
            <Panel h={87} title="Panel Heading" extra={
              <Tools>
                <Tool $bg="#d1eed0" $b="#a5dca0"><FaPlus /></Tool><Tool $bg="#a9c8e2" $b="#76a9d3"><FaPlus /></Tool>
                <Tool $bg="#e3abab" $b="#d5807f"><FaPlus /></Tool><Tool $bg="#f4d1ad" $b="#eebb80"><FaPlus /></Tool>
                <Tool $bg="#bdd6e2" $b="#92bdd1"><FaPlus /></Tool>
              </Tools>
            }><Body $p={14}>Panel Body</Body></Panel>
          </Col>
        </Row>
      </Page>
      <Strip $h={19} $t={9}>http://stygiansabyss.github.io/NukaCode-Bootstrap-Dark/ Wed Feb 04 2015 23:40:14 GMT-0600 (CST)</Strip>
    </Root>
  );
}
